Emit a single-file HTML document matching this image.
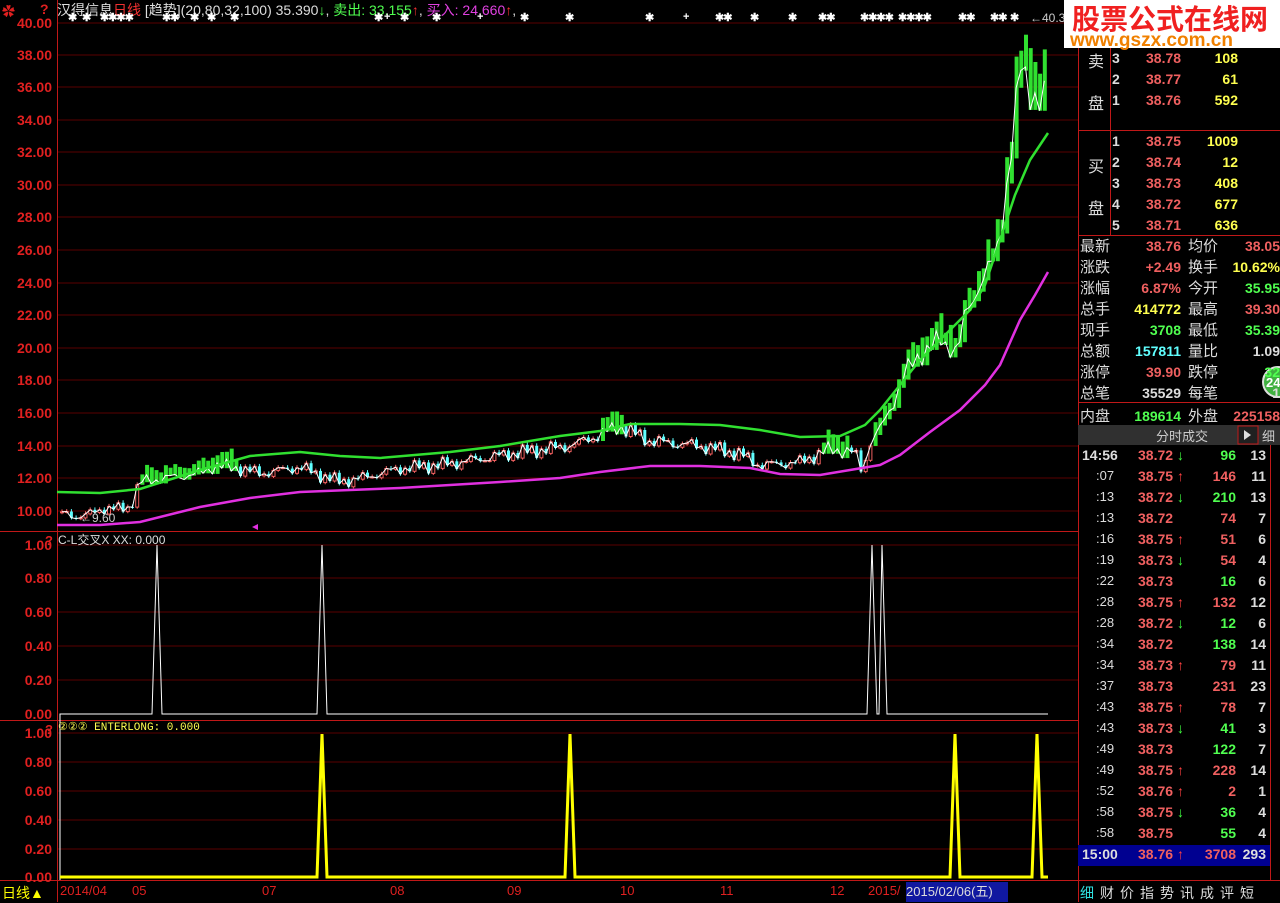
<!DOCTYPE html>
<html><head><meta charset="utf-8"><style>
body{margin:0;background:#000;width:1280px;height:902px;overflow:hidden;position:relative;font-family:"Liberation Sans","Noto Sans CJK SC",sans-serif;}
.a{position:absolute;white-space:nowrap;}
.ax{position:absolute;left:0;width:52px;text-align:right;color:#e02020;font:bold 14px "Liberation Sans",sans-serif;}
.r{position:absolute;font-size:14px;font-weight:bold;white-space:nowrap;}
.lbl{color:#ddd;font-size:15px;font-weight:normal;}
.rd{color:#f06060}.yl{color:#ffff50}.gr{color:#50ff50}.wh{color:#ddd}.cy{color:#60ffff}
.tr{position:absolute;left:1078px;width:192px;height:21px;font-size:14px;font-weight:bold;}
.tr span{position:absolute;top:2px;}
</style></head><body>
<svg id="sv" width="1280" height="902" style="position:absolute;left:0;top:0">
<g stroke="#5a0000" stroke-width="1">
<line x1="57" y1="23" x2="1078" y2="23"/><line x1="57" y1="55" x2="1078" y2="55"/><line x1="57" y1="87" x2="1078" y2="87"/><line x1="57" y1="120" x2="1078" y2="120"/><line x1="57" y1="152" x2="1078" y2="152"/><line x1="57" y1="185" x2="1078" y2="185"/><line x1="57" y1="217" x2="1078" y2="217"/><line x1="57" y1="250" x2="1078" y2="250"/><line x1="57" y1="283" x2="1078" y2="283"/><line x1="57" y1="315" x2="1078" y2="315"/><line x1="57" y1="348" x2="1078" y2="348"/><line x1="57" y1="380" x2="1078" y2="380"/><line x1="57" y1="413" x2="1078" y2="413"/><line x1="57" y1="446" x2="1078" y2="446"/><line x1="57" y1="478" x2="1078" y2="478"/><line x1="57" y1="511" x2="1078" y2="511"/>
<line x1="57" y1="545" x2="1078" y2="545"/><line x1="57" y1="578" x2="1078" y2="578"/><line x1="57" y1="612" x2="1078" y2="612"/><line x1="57" y1="646" x2="1078" y2="646"/><line x1="57" y1="680" x2="1078" y2="680"/>
<line x1="57" y1="733" x2="1078" y2="733"/><line x1="57" y1="762" x2="1078" y2="762"/><line x1="57" y1="791" x2="1078" y2="791"/><line x1="57" y1="820" x2="1078" y2="820"/><line x1="57" y1="849" x2="1078" y2="849"/>
</g>
<g stroke="#c01818" stroke-width="1">
<line x1="57.5" y1="0" x2="57.5" y2="902"/><line x1="1078.5" y1="0" x2="1078.5" y2="902"/>
<line x1="0" y1="531.5" x2="1078" y2="531.5"/><line x1="0" y1="720.5" x2="1078" y2="720.5"/><line x1="0" y1="880.5" x2="1280" y2="880.5"/>
<line x1="1078" y1="130.5" x2="1280" y2="130.5"/><line x1="1078" y1="235.5" x2="1280" y2="235.5"/><line x1="1078" y1="402.5" x2="1280" y2="402.5"/><line x1="1078" y1="425.5" x2="1280" y2="425.5"/>
<line x1="1110.5" y1="48" x2="1110.5" y2="235"/><line x1="1270.5" y1="445" x2="1270.5" y2="880"/>
</g>
<rect x="1078" y="425" width="202" height="20" fill="#303030"/>
<rect x="1238" y="426" width="20" height="18" fill="#202020" stroke="#c01818"/>
<polygon points="1244,430 1244,440 1251,435" fill="#ddd"/>
<g id="cd"></g>
<polyline fill="none" stroke="#30e030" stroke-width="2.5" points="57,492 100,493 140,489 200,470 250,456 300,452 340,456 380,458 450,452 500,446 560,436 600,431 630,424 680,424 720,425 760,430 800,437 840,436 865,425 880,410 900,385 920,360 950,330 970,310 985,285 1000,240 1015,195 1030,160 1048,133"/>
<polyline fill="none" stroke="#e030e0" stroke-width="2.5" points="57,525 100,525 140,522 200,507 250,498 300,492 350,490 400,488 450,485 500,482 560,478 600,472 650,466 700,466 750,468 780,474 820,475 850,470 880,465 900,455 930,432 960,410 985,385 1000,365 1020,320 1035,295 1048,272"/>
<polygon points="252,527 258,524 258,530" fill="#e030e0"/>
<polyline fill="none" stroke="#fff" stroke-width="1" points="60,880 60,714 152,714 157,545 162,714 317,714 322,545 327,714 867,714 872,545 877,714 879,714 882,545 887,714 1048,714"/>
<polyline fill="none" stroke="#ffff00" stroke-width="3" points="60,877 317,877 322,734 327,877 565,877 570,734 575,877 950,877 955,734 960,877 1032,877 1037,734 1042,877 1048,877"/>
<text x="80" y="522" fill="#ccc" font-size="12" font-family="Liberation Sans">←9.60</text>
<text x="1030" y="22" fill="#ccc" font-size="12" font-family="Liberation Sans">←40.3</text>
<rect x="1078" y="845" width="192" height="21" fill="#000090"/>
<circle cx="1278" cy="382" r="15" fill="#40b040" stroke="#ddd" stroke-width="2"/>
<text x="1266" y="387" fill="#fff" font-size="13" font-weight="bold">24</text>
</svg>
<div class="a" style="left:2px;top:1px;color:#e02020;font-size:13px;font-weight:bold">✿</div>
<div class="a" style="left:40px;top:1px;color:#e02020;font-size:14px;font-weight:bold">?</div>
<div class="a" style="left:57px;top:0px;font-size:14px;color:#ddd">汉得信息<span style="color:#f03030">日线</span> [趋势](20,80,32,100) 35.390<span style="color:#50ff50">↓</span>, <span style="color:#50ff50">卖出: 33.155</span><span style="color:#f03030">↑</span>, <span style="color:#e040e0">买入: 24.660</span><span style="color:#f03030">↑</span>,</div>
<div class="a" style="top:11px;left:0;color:#fff;font-size:11px;font-weight:bold;letter-spacing:-1px">
<span class="a" style="left:68px">✱</span><span class="a" style="left:82px">✱</span><span class="a" style="left:100px">✱✱✱✱</span><span class="a" style="left:162px">✱✱</span><span class="a" style="left:190px">✱</span><span class="a" style="left:207px">✱</span><span class="a" style="left:230px">✱</span><span class="a" style="left:374px">✱</span><span class="a" style="left:384px">+</span><span class="a" style="left:400px">✱</span><span class="a" style="left:432px">✱</span><span class="a" style="left:477px">+</span><span class="a" style="left:520px">✱</span><span class="a" style="left:565px">✱</span><span class="a" style="left:645px">✱</span><span class="a" style="left:683px">+</span><span class="a" style="left:715px">✱✱</span><span class="a" style="left:750px">✱</span><span class="a" style="left:788px">✱</span><span class="a" style="left:818px">✱✱</span><span class="a" style="left:860px">✱✱✱✱</span><span class="a" style="left:898px">✱✱✱✱</span><span class="a" style="left:958px">✱✱</span><span class="a" style="left:990px">✱✱</span><span class="a" style="left:1010px">✱</span></div>
<div class="ax" style="top:15px">40.00</div><div class="ax" style="top:47px">38.00</div><div class="ax" style="top:79px">36.00</div><div class="ax" style="top:112px">34.00</div><div class="ax" style="top:144px">32.00</div><div class="ax" style="top:177px">30.00</div><div class="ax" style="top:209px">28.00</div><div class="ax" style="top:242px">26.00</div><div class="ax" style="top:275px">24.00</div><div class="ax" style="top:307px">22.00</div><div class="ax" style="top:340px">20.00</div><div class="ax" style="top:372px">18.00</div><div class="ax" style="top:405px">16.00</div><div class="ax" style="top:438px">14.00</div><div class="ax" style="top:470px">12.00</div><div class="ax" style="top:503px">10.00</div>
<div class="ax" style="top:537px">1.00</div><div class="ax" style="top:570px">0.80</div><div class="ax" style="top:604px">0.60</div><div class="ax" style="top:638px">0.40</div><div class="ax" style="top:672px">0.20</div><div class="ax" style="top:706px">0.00</div>
<div class="ax" style="top:725px">1.00</div><div class="ax" style="top:754px">0.80</div><div class="ax" style="top:783px">0.60</div><div class="ax" style="top:812px">0.40</div><div class="ax" style="top:841px">0.20</div><div class="ax" style="top:869px">0.00</div>
<div class="a" style="left:45px;top:533px;color:#e02020;font-size:13px;font-weight:bold">?</div>
<div class="a" style="left:45px;top:722px;color:#e02020;font-size:13px;font-weight:bold">?</div>
<div class="a" style="left:58px;top:531px;color:#ddd;font-size:12px">C-L交叉X XX: 0.000</div>
<div class="a" style="left:58px;top:720px;color:#ffff50;font-size:11px;font-family:'Liberation Mono',monospace">②②② ENTERLONG: 0.000</div>
<div class="a" style="left:2px;top:883px;color:#ffff00;font-size:14px">日线▲</div>
<div class="a" style="top:883px;left:0;color:#e02020;font-size:13px">
<span class="a" style="left:60px">2014/04</span><span class="a" style="left:132px">05</span><span class="a" style="left:262px">07</span><span class="a" style="left:390px">08</span><span class="a" style="left:507px">09</span><span class="a" style="left:620px">10</span><span class="a" style="left:720px">11</span><span class="a" style="left:830px">12</span><span class="a" style="left:868px">2015/</span></div>
<div class="a" style="left:906px;top:882px;height:20px;width:102px;background:#1018a0;color:#ddd;font-size:13px;line-height:20px">2015/02/06(五)</div>
<div class="a" style="left:1080px;top:883px;font-size:14px;color:#ddd;letter-spacing:6px"><span style="color:#30e0e0">细</span>财价指势讯成评短</div>
<div class="a" style="left:1112px;top:27px;font-size:14px;font-weight:bold;color:#ddd">4</div>
<div class="a" style="left:1146px;top:27px;font-size:14px;font-weight:bold;color:#f06060">38.80</div>
<div class="a" style="left:1190px;top:27px;width:48px;text-align:right;font-size:14px;font-weight:bold;color:#ffff50">788</div>
<div class="r lbl" style="left:1088px;top:48px;font-size:16px">卖</div>
<div class="a" style="left:1064px;top:0;width:216px;height:48px;background:#fff"></div>
<div class="a" style="left:1072px;top:-2px;color:#f02020;font-size:28px;font-weight:bold;letter-spacing:0px">股票公式在线网</div>
<div class="a" style="left:1070px;top:30px;color:#f08000;font-size:19px;font-weight:bold">www.gszx.com.cn</div>
<div class="r lbl" style="left:1088px;top:90px;font-size:16px">盘</div>
<div class="r lbl" style="left:1088px;top:153px;font-size:16px">买</div>
<div class="r lbl" style="left:1088px;top:195px;font-size:16px">盘</div>
<div class="a" style="left:1112px;top:48px;font-size:14px;font-weight:bold;line-height:21px;color:#ddd">3<br>2<br>1</div>
<div class="a" style="left:1146px;top:48px;font-size:14px;font-weight:bold;line-height:21px;color:#f06060">38.78<br>38.77<br>38.76</div>
<div class="a" style="left:1190px;top:48px;width:48px;text-align:right;font-size:14px;font-weight:bold;line-height:21px;color:#ffff50">108<br>61<br>592</div>
<div class="a" style="left:1112px;top:131px;font-size:14px;font-weight:bold;line-height:21px;color:#ddd">1<br>2<br>3<br>4<br>5</div>
<div class="a" style="left:1146px;top:131px;font-size:14px;font-weight:bold;line-height:21px;color:#f06060">38.75<br>38.74<br>38.73<br>38.72<br>38.71</div>
<div class="a" style="left:1190px;top:131px;width:48px;text-align:right;font-size:14px;font-weight:bold;line-height:21px;color:#ffff50">1009<br>12<br>408<br>677<br>636</div>
<div class="a" style="left:1080px;top:236px;font-size:15px;line-height:21px;color:#ddd">最新<br>涨跌<br>涨幅<br>总手<br>现手<br>总额<br>涨停<br>总笔<br><span style="line-height:25px">内盘</span></div>
<div class="a" style="left:1188px;top:236px;font-size:15px;line-height:21px;color:#ddd">均价<br>换手<br>今开<br>最高<br>最低<br>量比<br>跌停<br>每笔<br><span style="line-height:25px">外盘</span></div>
<div class="a" style="left:1110px;top:236px;width:71px;text-align:right;font-size:14px;font-weight:bold;line-height:21px"><span class="rd">38.76</span><br><span class="rd">+2.49</span><br><span class="rd">6.87%</span><br><span class="yl">414772</span><br><span class="gr">3708</span><br><span class="cy">157811</span><br><span class="rd">39.90</span><br><span class="wh">35529</span><br><span class="gr" style="line-height:25px">189614</span></div>
<div class="a" style="left:1230px;top:236px;font-size:14px;font-weight:bold;line-height:21px;text-align:right;width:50px;overflow:hidden;direction:ltr"><span class="rd">38.05</span><br><span class="yl">10.62%</span><br><span class="gr">35.95</span><br><span class="rd">39.30</span><br><span class="gr">35.39</span><br><span class="wh">1.09</span><br><span class="gr">32</span><br><span class="wh">1</span><br><span class="rd" style="line-height:25px">225158</span></div>
<div class="a" style="left:1156px;top:426px;font-size:13px;color:#ccc">分时成交</div>
<div class="a" style="left:1262px;top:426px;font-size:13px;color:#ccc">细</div>
<div id="tl"></div>
<script>
var rows=[["14:56","38.72","d","96","g","13"],[":07","38.75","u","146","r","11"],[":13","38.72","d","210","g","13"],[":13","38.72","","74","r","7"],[":16","38.75","u","51","r","6"],[":19","38.73","d","54","r","4"],[":22","38.73","","16","g","6"],[":28","38.75","u","132","r","12"],[":28","38.72","d","12","g","6"],[":34","38.72","","138","g","14"],[":34","38.73","u","79","r","11"],[":37","38.73","","231","r","23"],[":43","38.75","u","78","r","7"],[":43","38.73","d","41","g","3"],[":49","38.73","","122","g","7"],[":49","38.75","u","228","r","14"],[":52","38.76","u","2","r","1"],[":58","38.75","d","36","g","4"],[":58","38.75","","55","g","4"],["15:00","38.76","u","3708","r","293"]];
var h="";rows.forEach(function(r,i){var y=445+i*21;var big=r[0].length>3;
h+='<div class="tr" style="top:'+y+'px"><span style="left:'+(big?4:18)+'px;color:#ddd;'+(big?'':'font-weight:normal;font-size:13px')+'">'+r[0]+'</span><span style="left:60px;color:#f06060">'+r[1]+'</span>'+(r[2]?'<span style="left:99px;color:'+(r[2]=="u"?"#ff4040":"#40ff40")+'">'+(r[2]=="u"?"↑":"↓")+'</span>':'')+'<span style="left:100px;width:58px;text-align:right;color:'+(r[4]=="g"?"#50ff50":"#f06060")+'">'+r[3]+'</span><span style="left:158px;width:30px;text-align:right;color:#ddd">'+r[5]+'</span></div>';});
document.getElementById("tl").innerHTML=h;
function Y(p){return 511-(p-10)*16.27;}
var A=[[62,9.9],[80,9.6],[100,10.1],[130,10.2],[140,11.8],[200,12.3],[215,12.8],[240,12.6],[260,12.3],[300,12.7],[320,12.2],[340,11.8],[360,12.0],[400,12.6],[450,12.9],[480,13.2],[520,13.6],[560,13.9],[580,14.2],[620,15.2],[650,14.3],[700,14.0],[740,13.5],[760,12.8],[800,13.0],[830,13.8],[855,13.6],[862,12.4],[870,14.2],[880,15.0],[890,16.2],[905,18.5],[920,19.6],[940,20.5],[952,20.0],[958,19.8],[965,22.0],[980,24.0],[995,25.5],[1000,27],[1010,31.5],[1015,34],[1020,37.5],[1030,36],[1038,35],[1048,35.4]];
function C(x){for(var i=0;i<A.length-1;i++){if(x<=A[i+1][0]){var t=(x-A[i][0])/(A[i+1][0]-A[i][0]);return A[i][1]+t*(A[i+1][1]-A[i][1]);}}return A[A.length-1][1];}
var s="",pts=[],prev=C(62);
for(var x=62;x<=1048;x+=4.7){var c=C(x)+(Math.sin(x*0.7)*0.25+Math.sin(x*0.23)*0.2)*(C(x)/12);pts.push(x.toFixed(1)+","+Y(c).toFixed(1));
var o=prev;var up=c>=o;var hi=Math.max(o,c)+0.15,lo=Math.min(o,c)-0.1;
var strong=(x>=138&&x<=240)||(x>=875&&x<=1048)||(x>=600&&x<=625)||(x>=820&&x<=850);
if(strong){var tp=Math.max(o,c)+c*0.045*(0.6+0.6*Math.abs(Math.sin(x)));if(tp>40.2)tp=40.2;var yt=Y(tp),yb=Y(Math.min(o,c));s+='<rect x="'+(x-1.5).toFixed(1)+'" y="'+yt.toFixed(1)+'" width="4" height="'+Math.max(2,yb-yt).toFixed(1)+'" fill="#30e030"/>';}
else{var col=up?"#f06060":"#60ffff";s+='<line x1="'+x.toFixed(1)+'" y1="'+Y(hi).toFixed(1)+'" x2="'+x.toFixed(1)+'" y2="'+Y(lo).toFixed(1)+'" stroke="'+col+'"/>';
var bh=Math.max(1,Math.abs(Y(o)-Y(c)));s+='<rect x="'+(x-1.5).toFixed(1)+'" y="'+Math.min(Y(o),Y(c)).toFixed(1)+'" width="3" height="'+bh.toFixed(1)+'" '+(up?'fill="#000" stroke="#f06060"':'fill="#60ffff"')+'/>';}
prev=c;}
s+='<polyline fill="none" stroke="#fff" stroke-width="1" points="'+pts.join(" ")+'"/>';
document.getElementById("cd").innerHTML=s;
</script>
</body></html>
